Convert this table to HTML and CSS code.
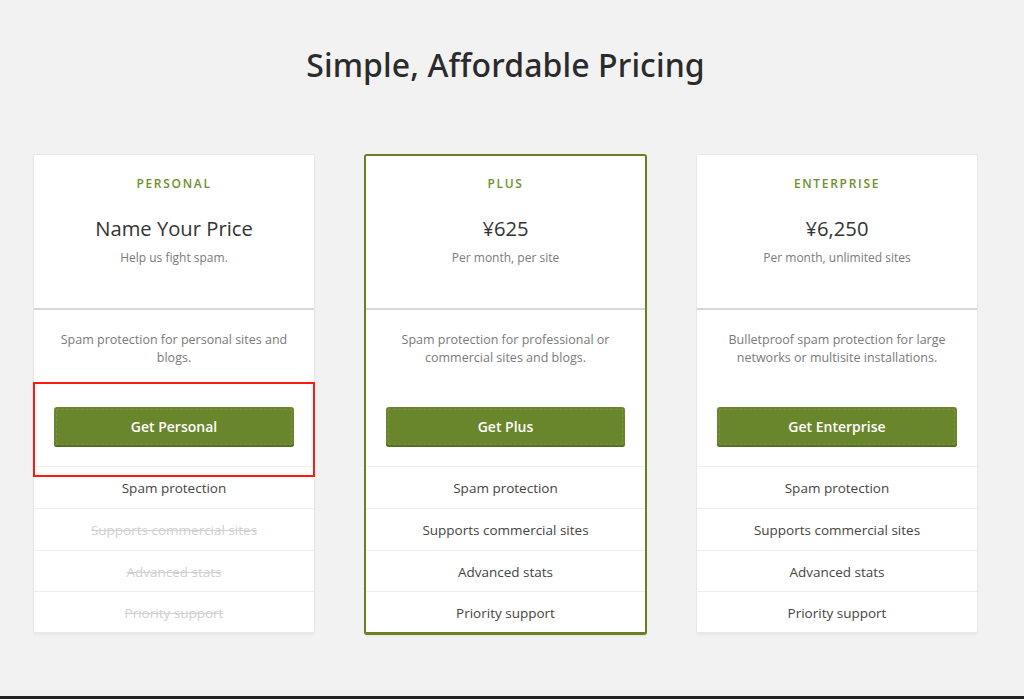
FILE: index.html
```html
<!DOCTYPE html>
<html lang="en">
<head>
<meta charset="utf-8">
<title>Simple, Affordable Pricing</title>
<link rel="stylesheet" href="styles.css">
</head>
<body>
<main class="page">
  <h1 class="title">Simple, Affordable Pricing</h1>
  <div class="plans">
    <section class="plan">
      <header class="plan-head">
        <div class="tier">PERSONAL</div>
        <div class="price">Name Your Price</div>
        <div class="sub">Help us fight spam.</div>
      </header>
      <p class="desc">Spam protection for personal sites and blogs.</p>
      <div class="cta">
        <a class="btn" href="#">Get Personal</a>
        <span class="highlight"></span>
      </div>
      <ul class="features">
        <li>Spam protection</li>
        <li class="off">Supports commercial sites</li>
        <li class="off">Advanced stats</li>
        <li class="off">Priority support</li>
      </ul>
    </section>
    <section class="plan plan-featured">
      <header class="plan-head">
        <div class="tier">PLUS</div>
        <div class="price">¥625</div>
        <div class="sub">Per month, per site</div>
      </header>
      <p class="desc">Spam protection for professional or commercial sites and blogs.</p>
      <div class="cta">
        <a class="btn" href="#">Get Plus</a>
      </div>
      <ul class="features">
        <li>Spam protection</li>
        <li>Supports commercial sites</li>
        <li>Advanced stats</li>
        <li>Priority support</li>
      </ul>
    </section>
    <section class="plan">
      <header class="plan-head">
        <div class="tier">ENTERPRISE</div>
        <div class="price">¥6,250</div>
        <div class="sub">Per month, unlimited sites</div>
      </header>
      <p class="desc">Bulletproof spam protection for large networks or multisite installations.</p>
      <div class="cta">
        <a class="btn" href="#">Get Enterprise</a>
      </div>
      <ul class="features">
        <li>Spam protection</li>
        <li>Supports commercial sites</li>
        <li>Advanced stats</li>
        <li>Priority support</li>
      </ul>
    </section>
  </div>
</main>
<footer class="footer"></footer>
</body>
</html>
```
FILE: styles.css
```css
* { box-sizing: border-box; }
html, body { margin: 0; padding: 0; }
body {
  background: #f2f2f2;
  font-family: "Open Sans", "Noto Sans", sans-serif;
  color: #444;
  height: 699px;
  overflow: hidden;
  display: flex;
  flex-direction: column;
}
.page {
  flex: 1;
  width: 945px;
  margin-left: 33px;
}
.title {
  margin: 0;
  padding-top: 43px;
  height: 154px;
  text-align: center;
  font-family: "Noto Sans", "Open Sans", sans-serif;
  font-weight: 500;
  font-size: 32px;
  line-height: 44px;
  color: #2b2b2b;
  letter-spacing: 0.1px;
}
.plans {
  display: grid;
  grid-template-columns: 282px 283px 282px;
  column-gap: 49px;
  align-items: start;
}
.plan {
  background: #fff;
  border: 1px solid #e8e8e8;
  border-radius: 2px;
  box-shadow: 0 2px 2px rgba(0,0,0,0.04);
  text-align: center;
}
.plan-featured {
  border: 2px solid #6a7f22;
  border-bottom-width: 3px;
  border-radius: 3px;
}
.plan-head {
  padding: 20px 20px 41px;
  border-bottom: 2px solid #d6d6d6;
}
.plan-featured .plan-head {
  padding-top: 19px;
}
.tier {
  font-size: 12px;
  line-height: 18px;
  font-weight: 600;
  letter-spacing: 1.7px;
  color: #6f8f2e;
}
.price {
  margin-top: 21px;
  font-size: 20.2px;
  line-height: 28px;
  font-weight: 500;
  color: #333;
}
.sub {
  margin-top: 7px;
  font-size: 12px;
  line-height: 18px;
  color: #7a7a7a;
}
.desc {
  margin: 0;
  padding: 21px 24px 0;
  height: 57px;
  font-size: 12.5px;
  line-height: 18px;
  color: #7a7a7a;
}
.cta {
  position: relative;
  padding: 40px 20px 19px;
  border-bottom: 1px solid #efefef;
}
.btn {
  display: block;
  height: 40px;
  line-height: 40px;
  background: #6a862c;
  color: #fff;
  font-size: 14px;
  font-weight: 600;
  text-decoration: none;
  border-radius: 3px;
  box-shadow: inset 0 -2px 0 #566f22;
  outline: 1px dashed rgba(255,255,255,0.1);
  outline-offset: -3px;
}
.highlight {
  position: absolute;
  left: -1px;
  right: -1px;
  top: 15px;
  bottom: -11px;
  border: 2px solid #ff1a10;
  pointer-events: none;
}
.features {
  list-style: none;
  margin: 0;
  padding: 0;
}
.features li {
  height: 41.3px;
  padding-top: 2px;
  line-height: 39px;
  font-size: 13.5px;
  color: #444;
  border-top: 1px solid #ededed;
}
.features li:first-child { border-top: none; }
.features li.off {
  color: #d0d0d0;
  text-decoration: line-through;
}
.footer {
  height: 3px;
  background: #222;
}
```
